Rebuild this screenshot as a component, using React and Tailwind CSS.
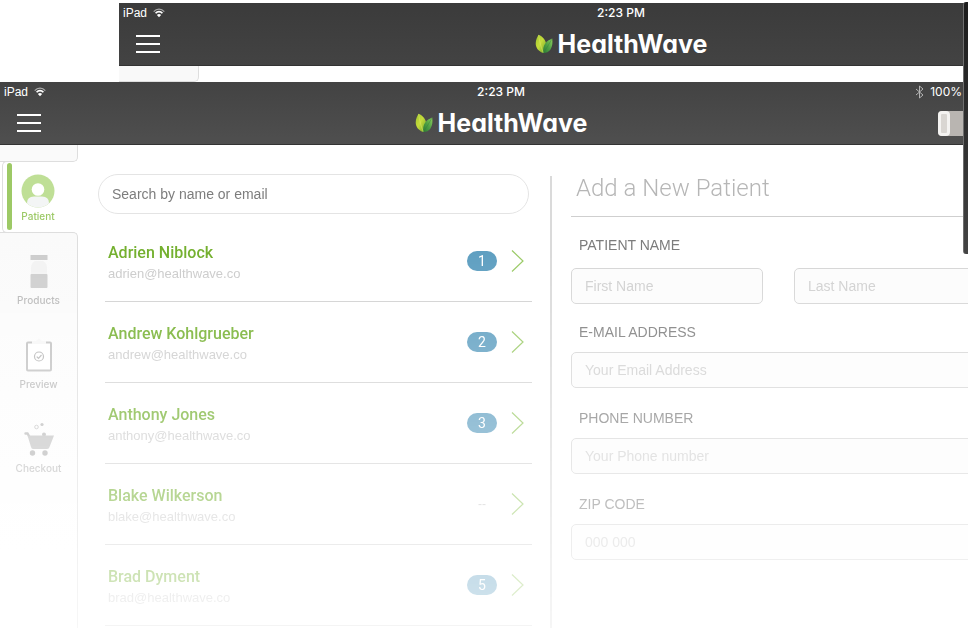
import React from "react";

const patients = [
  { name: "Adrien Niblock", email: "adrien@healthwave.co", count: "1" },
  { name: "Andrew Kohlgrueber", email: "andrew@healthwave.co", count: "2" },
  { name: "Anthony Jones", email: "anthony@healthwave.co", count: "3" },
  { name: "Blake Wilkerson", email: "blake@healthwave.co", count: null },
  { name: "Brad Dyment", email: "brad@healthwave.co", count: "5" },
];

function WifiIcon() {
  return (
    <svg width="12" height="10" viewBox="0 0 12 10" fill="none" stroke="#fff" aria-hidden="true">
      <path d="M0.7 3.6C3.6 0.3 8.4 0.3 11.3 3.6" strokeWidth="1.2" opacity="0.55" />
      <path d="M2.6 5.3C4.5 3.1 7.5 3.1 9.4 5.3" strokeWidth="1.7" />
      <path d="M6 9.2 3.9 6.9C5 5.8 7 5.8 8.1 6.9Z" fill="#fff" stroke="none" />
    </svg>
  );
}

function BluetoothIcon() {
  return (
    <svg width="9" height="14" viewBox="0 0 9 14" fill="none" stroke="#b4b4b4" strokeWidth="1" aria-hidden="true">
      <path d="M1 4 8 10 4.5 13V1L8 4 1 10" />
    </svg>
  );
}

function Leaves() {
  return (
    <svg width="18" height="20" viewBox="0 0 18 20" aria-hidden="true">
      <defs>
        <linearGradient id="leafLight" x1="0" y1="0" x2="1" y2="1">
          <stop offset="0" stopColor="#9fc62c" />
          <stop offset="0.45" stopColor="#c6dc3c" />
          <stop offset="1" stopColor="#6fa52a" />
        </linearGradient>
        <linearGradient id="leafDark" x1="1" y1="0" x2="0" y2="1">
          <stop offset="0" stopColor="#8fd05f" />
          <stop offset="0.5" stopColor="#4fa045" />
          <stop offset="1" stopColor="#2c7a35" />
        </linearGradient>
      </defs>
      <path d="M3.6 0.8C8 2.6 11.4 6.6 11.2 11.5 11.1 14.8 10 17.2 8.4 19 3.8 17.6 0.6 14 0.7 9.2 0.8 5.6 2.3 3.2 3.6 0.8Z" fill="url(#leafLight)" />
      <path d="M17.2 4.6C17.7 8.5 17.6 12.3 15.5 15.4 13.8 17.8 11.2 18.9 8.4 19 7.8 15.8 8.2 12 10.4 9.2 12.2 6.8 14.8 5.8 17.2 4.6Z" fill="url(#leafDark)" />
      <path d="M3.6 1C4.6 7.4 6 13.6 8.4 19" stroke="#e4ee7a" strokeWidth="0.6" fill="none" opacity="0.7" />
      <path d="M17 4.8C14.6 9.6 11.6 14 8.4 19" stroke="#2f7e38" strokeWidth="0.7" fill="none" opacity="0.6" />
    </svg>
  );
}

function TopBar({ front }) {
  return (
    <header
      className={
        "h-[63px] border-b border-[#333333] text-white " +
        (front
          ? "bg-linear-to-b from-[#434343] to-[#4f4f4f]"
          : "bg-linear-to-b from-[#3b3b3b] to-[#434343]")
      }
    >
      <div className="grid h-5 grid-cols-3 items-center text-[12px] leading-5">
        <span className="flex items-center gap-1.5 pl-1">
          iPad <WifiIcon />
        </span>
        <span className="text-center font-['Inter'] font-medium">2:23 PM</span>
        {front && (
          <span className="flex items-center justify-end gap-1.5 pr-10 font-['Inter']">
            <BluetoothIcon /> 100%
          </span>
        )}
      </div>
      <div className="grid h-[42px] grid-cols-[1fr_auto_1fr] items-center">
        <button type="button" aria-label="Menu" className="ml-4 flex h-8 w-[26px] flex-col items-center justify-center gap-1.5">
          <span className="h-0.5 w-6 bg-white" />
          <span className="h-0.5 w-6 bg-white" />
          <span className="h-0.5 w-6 bg-white" />
        </button>
        <div className="flex items-center gap-[5px]">
          <Leaves />
          <span className="font-['Inter'] text-[25px] leading-8 font-bold [font-feature-settings:'cv11']">HealthWave</span>
        </div>
        {front && (
          <span className="mr-8 flex h-[25px] w-8 justify-self-end rounded-[4px] bg-[#b9b5b1]">
            <span className="h-[25px] w-3 rounded-[4px] border-[3px] border-[#f4f3f1] bg-[#d9d6d2]" />
          </span>
        )}
      </div>
    </header>
  );
}

function ProductIcon() {
  return (
    <svg width="32" height="36" viewBox="0 0 32 36" aria-hidden="true">
      <rect x="7.500" y="1" width="17" height="5" fill="#cdcdcd" />
      <path d="M8 20V14Q8 9 12 7H20Q24 9 24 14V20Z" fill="#f3f3f3" />
      <rect x="7.500" y="20" width="17" height="14" rx="1" fill="#cfcfcf" />
    </svg>
  );
}

function PreviewIcon() {
  return (
    <svg width="32" height="36" viewBox="0 0 32 36" fill="none" aria-hidden="true">
      <rect x="4" y="4.500" width="24" height="28" rx="1" fill="#fff" stroke="#c2c2c2" strokeWidth="2" />
      <path d="M9 6V3H13L16 0.500 19 3H23V6Z" fill="#f6f6f6" />
      <circle cx="16" cy="18.500" r="4.500" stroke="#b5b5b5" strokeWidth="1.200" />
      <path d="M13.700 18.600 15.500 20.300 18.500 17" stroke="#b5b5b5" strokeWidth="1.200" />
    </svg>
  );
}

function CartIcon() {
  return (
    <svg width="32" height="36" viewBox="0 0 32 36" fill="none" aria-hidden="true">
      <circle cx="13.500" cy="5" r="1.800" stroke="#c6c6c6" />
      <circle cx="19" cy="2.500" r="1.600" fill="#b8b8b8" />
      <circle cx="21" cy="12.500" r="2" fill="#b8b8b8" />
      <path d="M2.500 11.500H4.500L6 14" stroke="#b8b8b8" strokeWidth="2.400" strokeLinecap="round" />
      <path d="M4.500 13.500H31L26.500 25Q26 27 24 27H10Q8.500 27 8 25Z" fill="#c2c2c2" />
      <circle cx="9.500" cy="31" r="2.700" fill="#b2b2b2" />
      <circle cx="22" cy="31" r="2.700" fill="#b2b2b2" />
    </svg>
  );
}

function Avatar() {
  return (
    <svg width="34" height="34" viewBox="0 0 34 34" aria-hidden="true">
      <defs>
        <clipPath id="avatarDisc">
          <circle cx="17" cy="17" r="16.500" />
        </clipPath>
      </defs>
      <circle cx="17" cy="17" r="16.500" fill="#bfdf96" />
      <circle cx="17" cy="15.500" r="6.300" fill="#fff" />
      <path d="M6 34V29Q6 22.500 13 22.500H21Q28 22.500 28 29V34Z" fill="#f3f5f5" clipPath="url(#avatarDisc)" />
    </svg>
  );
}

const tools = [
  { label: "Products", Icon: ProductIcon },
  { label: "Preview", Icon: PreviewIcon },
  { label: "Checkout", Icon: CartIcon },
];

function Sidebar() {
  return (
    <nav className="flex w-[78px] shrink-0 flex-col font-['Inter'] text-[10px] leading-4 font-medium">
      <div className="h-[17px] rounded-br-[5px] border-r border-b border-[#dedede] bg-[#fafafa]" />
      <button
        type="button"
        className="-my-px mr-[5px] ml-0.5 flex h-[72px] rounded-l-[5px] border-y border-l border-[#dedede] bg-white text-[#9cc966]"
      >
        <span className="mt-px ml-1 h-[67px] w-[5px] rounded-full bg-[#9dc966]" />
        <span className="flex w-[52px] flex-col items-center pt-3">
          <Avatar />
          Patient
        </span>
      </button>
      <div className="flex flex-1 flex-col gap-[30px] rounded-tr-[5px] border-t border-r border-[#dedede] bg-linear-to-b from-[#fafafa] to-white pt-[21px] text-[#b8b8b8]">
        {tools.map(({ label, Icon }) => (
          <button key={label} type="button" className="flex flex-col items-center gap-0.5">
            <Icon />
            {label}
          </button>
        ))}
      </div>
    </nav>
  );
}

function PatientList() {
  return (
    <section className="flex w-[434px] shrink-0 flex-col pt-[29px]">
      <input
        type="search"
        aria-label="Search patients"
        placeholder="Search by name or email"
        className="mr-[3px] h-10 rounded-full border border-[#e4e4e4] px-[13px] text-[14px] text-[#7d7d7d] placeholder-[#7d7d7d]"
      />
      <ul className="mt-[7px] ml-[7px]">
        {patients.map((p) => (
          <li key={p.name} className="flex h-[81px] items-center border-b border-[#d2d2d2] pr-2 pl-[3px]">
            <div className="flex-1 pt-1">
              <p className="font-['Roboto'] text-[16px] leading-[22px] font-medium text-[#74b02f]">{p.name}</p>
              <p className="text-[13px] leading-5 text-[#cbcbcb]">{p.email}</p>
            </div>
            {p.count ? (
              <span className="flex h-5 w-[30px] items-center justify-center rounded-full bg-[#5f9fc1] font-['Roboto'] text-[14px] leading-5 text-white">
                {p.count}
              </span>
            ) : (
              <span className="w-[30px] text-center text-[12px] text-[#c8c8c8]">--</span>
            )}
            <a href="#patient" aria-label={"Open " + p.name} className="ml-3.5">
              <svg width="13" height="24" viewBox="0 0 13 24" fill="none" stroke="#9aca66" strokeWidth="1.2" aria-hidden="true">
                <path d="M1 1.500 12 12 1 22.500" />
              </svg>
            </a>
          </li>
        ))}
      </ul>
    </section>
  );
}

const fieldClass =
  "h-9 w-full min-w-0 rounded-[5px] border border-[#d6d6d6] bg-[#fcfcfc] px-[13px] text-[14px] placeholder-[#d0d0d0]";
const labelClass = "pl-2 text-[14px] leading-5 text-[#7c7c7c]";

function Field({ id, label, placeholder, type, className }) {
  return (
    <div className={"flex flex-col gap-2.5 " + className}>
      <label htmlFor={id} className={labelClass}>
        {label}
      </label>
      <input id={id} type={type} placeholder={placeholder} className={fieldClass} />
    </div>
  );
}

function NewPatientForm() {
  return (
    <form className="min-w-0 flex-1 pt-[27px] pr-4 pl-[19px]">
      <h2 className="border-b border-[#cfcfcf] pb-3 pl-[5px] font-['Roboto'] text-[24px] leading-8 font-light text-[#b6b6b6]">
        Add a New Patient
      </h2>
      <fieldset className="mt-[18px]">
        <legend className={labelClass}>PATIENT NAME</legend>
        <div className="grid grid-cols-2 gap-[31px] pt-[13px]">
          <input aria-label="First name" placeholder="First Name" className={fieldClass} />
          <input aria-label="Last name" placeholder="Last Name" className={fieldClass} />
        </div>
      </fieldset>
      <Field id="email" type="email" label="E-MAIL ADDRESS" placeholder="Your Email Address" className="mt-[18px]" />
      <Field id="phone" type="tel" label="PHONE NUMBER" placeholder="Your Phone number" className="mt-5" />
      <Field id="zip" type="text" label="ZIP CODE" placeholder="000 000" className="mt-5" />
    </form>
  );
}

export default function App() {
  return (
    <div className="relative flex min-h-screen flex-col overflow-hidden bg-white pt-[3px] font-['Liberation_Sans',Arial,sans-serif]">
      <div className="ml-[119px] w-[calc(100%+36px)]">
        <TopBar />
        <div className="h-4 w-20 rounded-br-[5px] border-r border-b border-[#dedede] bg-[#f9f9f9]" />
      </div>

      <div className="flex w-[calc(100%+34px)] flex-1 flex-col">
        <TopBar front />
        <main className="flex flex-1 [mask-image:linear-gradient(to_bottom,black_22%,rgba(0,0,0,0.25)_100%)]">
          <Sidebar />
          <div className="flex min-w-0 flex-1 pl-5">
            <PatientList />
            <div className="mt-[31px] ml-[18px] w-0.5 bg-[#dadada]" />
            <NewPatientForm />
          </div>
        </main>
      </div>

      <div className="absolute top-0.5 right-0 h-[252px] w-[5px] rounded-l-[3px] border-l border-[#6e6e6e] bg-linear-to-b from-[#1c1c1c] to-[#444444]" />
    </div>
  );
}
